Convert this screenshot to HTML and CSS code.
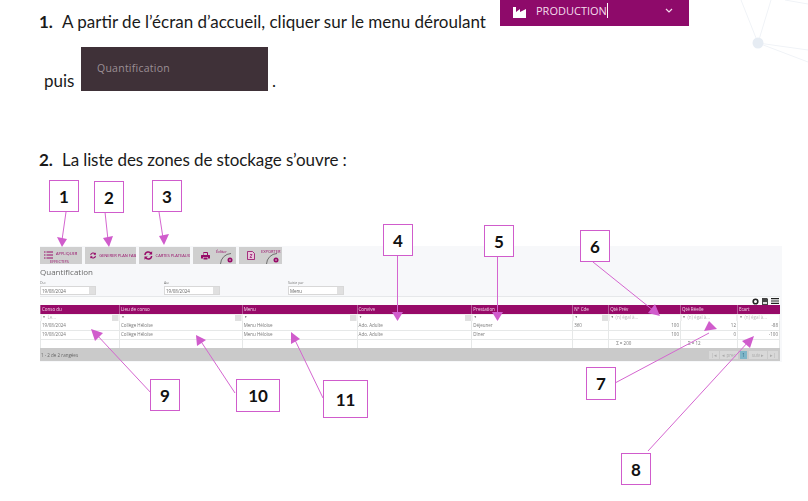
FILE: index.html
```html
<!DOCTYPE html>
<html lang="fr">
<head>
  <meta charset="UTF-8">
  <title>Quantification</title>
  <link rel="stylesheet" href="styles.css">
</head>
<body>
  <!-- fond décoratif -->
  <svg class="network" width="808" height="80" viewBox="0 0 808 80">
    <path d="M758 43L741 0M758 43L771 0M758 43L808 50M758 43L808 62M785 0L808 4" fill="none" stroke="#f0f3f7" stroke-width="1"/>
    <circle cx="758" cy="43" r="5.5" fill="#e6ecf3"/>
  </svg>

  <div class="step step-one">
    <b class="num">1.</b>
    <span class="step-text">A partir de l’écran d’accueil, cliquer sur le menu déroulant</span>
    <div class="prod-menu">
      <svg class="factory" width="13" height="11" viewBox="0 0 13 11"><path d="M0 0H3V5L7 2V5L13 2V11H0Z" fill="#fff"/></svg>
      <span class="prod-label"><span class="caret">PRODUCTION</span></span>
      <svg class="chevron" width="8" height="5" viewBox="0 0 8 5"><path d="M1 1L4 4L7 1" fill="none" stroke="#f4dcec" stroke-width="1.2"/></svg>
    </div>
  </div>

  <div class="step step-puis">
    <span class="puis">puis</span>
    <div class="quant-menu"><span>Quantification</span></div>
    <span class="dot">.</span>
  </div>

  <div class="step step-two">
    <b class="num">2.</b>
    <span class="step-text">La liste des zones de stockage s’ouvre :</span>
  </div>

  <div class="shot">
    <div class="toolbar">
      <div class="tool tool-first">
        <svg width="9" height="8" viewBox="0 0 9 8"><path d="M0 1H1.500M2.500 1H9M0 4H1.500M2.500 4H9M0 7H1.500M2.500 7H9" stroke="#970a68" stroke-width="1"/></svg>
        <span class="tool-two-lines"><span class="l1">APPLIQUER</span><span class="l2">EFFECTIFS</span></span>
      </div>
      <div class="tool tool-wide">
        <svg width="9" height="9" viewBox="0 0 9 9"><path d="M1 4A3.500 3.500 0 0 1 7.500 2.500M8 5A3.500 3.500 0 0 1 1.500 6.500" fill="none" stroke="#970a68" stroke-width="1.5"/><path d="M8.500 0V3.500H5ZM.5 9V5.500H4Z" fill="#970a68"/></svg>
        <span>GENERER PLAN FAB</span>
      </div>
      <div class="tool tool-wide">
        <svg width="9" height="9" viewBox="0 0 9 9"><path d="M1 4A3.500 3.500 0 0 1 7.500 2.500M8 5A3.500 3.500 0 0 1 1.500 6.500" fill="none" stroke="#970a68" stroke-width="1.500"/><path d="M8.500 0V3.500H5ZM.5 9V5.500H4Z" fill="#970a68"/></svg>
        <span>CARTES PLATEAUX</span>
      </div>
      <div class="tool tool-split">
        <svg width="9" height="8" viewBox="0 0 9 8"><path d="M2.500 .5H6.500V3" fill="none" stroke="#970a68" stroke-width="1"/><path d="M2 .5V3H0.500L0 3.500V6.500H2V5H7V6.500H9V3.500L8.500 3H2.500V.5Z" fill="#970a68"/><path d="M2.500 5.500H6.500V7.500H2.500Z" fill="#970a68"/></svg>
        <span class="tool-top">Éditer</span>
        <svg class="corner" width="16" height="12" viewBox="0 0 16 12"><path d="M.5 12A11 11 0 0 1 11 1.500" fill="none" stroke="#555" stroke-width=".8"/><circle cx="10" cy="8" r="2.500" fill="#970a68"/><circle cx="10" cy="8" r=".8" fill="#ddd"/></svg>
      </div>
      <div class="tool tool-split">
        <svg width="8" height="9" viewBox="0 0 8 9"><path d="M.5 .5H5.500L7.500 2.500V8.500H.5Z" fill="#e6c6da" stroke="#970a68" stroke-width=".8"/><path d="M3 3.500H5L3 6.500H5" fill="none" stroke="#970a68" stroke-width=".7"/></svg>
        <span class="tool-top">EXPORTER</span>
        <svg class="corner" width="16" height="12" viewBox="0 0 16 12"><path d="M.5 12A11 11 0 0 1 11 1.500" fill="none" stroke="#555" stroke-width=".8"/><circle cx="10" cy="8" r="2.500" fill="#970a68"/><circle cx="10" cy="8" r=".8" fill="#ddd"/></svg>
      </div>
    </div>

    <h1 class="shot-title">Quantification</h1>

    <div class="filters">
      <div class="field field-du">
        <label>Du:</label>
        <div class="combo"><span>19/08/2024</span><i class="drop"></i></div>
      </div>
      <div class="field field-au">
        <label>Au:</label>
        <div class="combo"><span>19/08/2024</span><i class="drop"></i></div>
      </div>
      <div class="field">
        <label>Saisie par</label>
        <div class="combo"><span>Menu</span><i class="drop"></i></div>
      </div>
    </div>

    <div class="grid-tools">
      <svg width="7" height="7" viewBox="0 0 7 7"><circle cx="3.500" cy="3.500" r="2.300" fill="none" stroke="#222" stroke-width="1.600"/></svg>
      <svg width="6" height="7" viewBox="0 0 6 7"><path d="M0 0H5L6 1V7H0Z" fill="#444"/><path d="M1 4H5V6H1Z" fill="#ddd"/></svg>
      <svg width="8" height="6" viewBox="0 0 8 6"><path d="M0 .7H8M0 3H8M0 5.300H8" stroke="#222" stroke-width="1.200"/></svg>
    </div>

    <table class="grid">
      <colgroup>
        <col class="c-date"><col class="c-lieu"><col class="c-menu"><col class="c-convive"><col class="c-presta"><col class="c-cde"><col class="c-prev"><col class="c-reel"><col class="c-ecart">
      </colgroup>
      <thead>
        <tr class="head">
          <th>Conso du</th><th>Lieu de conso</th><th>Menu</th><th>Convive</th><th>Prestation</th><th>N° Cde</th><th>Qté Prév</th><th>Qté Réelle</th><th>Ecart</th>
        </tr>
        <tr class="search">
          <td><div class="sf"><em>▼</em><span>Le...</span><i class="drop"></i></div></td>
          <td><div class="sf"><em>▼</em><i class="drop"></i></div></td>
          <td><div class="sf"><em>▼</em><i class="drop"></i></div></td>
          <td><div class="sf"><em>▼</em><i class="drop"></i></div></td>
          <td><div class="sf"><em>▼</em></div></td>
          <td><div class="sf"><em>▼</em><i class="drop"></i></div></td>
          <td><div class="sf"><em>▼</em><span>(n) égal à...</span></div></td>
          <td><div class="sf"><em>▼</em><span>(n) égal à...</span></div></td>
          <td><div class="sf"><em>▼</em><span>(n) égal à...</span></div></td>
        </tr>
      </thead>
      <tbody>
        <tr>
          <td>19/08/2024</td><td>Collège Héloïse</td><td>Menu Héloïse</td><td>Ado. Adulte</td><td>Déjeuner</td><td>360</td><td class="n">100</td><td class="n">12</td><td class="n">-88</td>
        </tr>
        <tr>
          <td>19/08/2024</td><td>Collège Héloïse</td><td>Menu Héloïse</td><td>Ado. Adulte</td><td>Dîner</td><td></td><td class="n">100</td><td class="n">0</td><td class="n">-100</td>
        </tr>
        <tr>
          <td></td><td></td><td></td><td></td><td></td><td></td><td class="sum">Σ = 200</td><td class="sum">Σ = 12</td><td></td>
        </tr>
      </tbody>
    </table>

    <div class="pager-bar">
      <span>1 - 2 de 2 rangées</span>
      <div class="pager">
        <a class="pg pg-end">|◂</a>
        <a class="pg pg-long">◂ prec</a>
        <a class="pg pg-on">1</a>
        <a class="pg pg-long">suiv ▸</a>
        <a class="pg pg-end">▸|</a>
      </div>
    </div>
  </div>

  <!-- flèches d'annotation -->
  <svg class="arrows" width="808" height="501" viewBox="0 0 808 501">
    <g class="arrow-lines">
      <path d="M66 212L62 240"/>
      <path d="M105 212L108 240"/>
      <path d="M159 212L163 238"/>
      <path d="M397.500 256V314"/>
      <path d="M497.500 257V314"/>
      <path d="M593 262L654 311"/>
      <path d="M615 383L709 333"/>
      <path d="M648 451L749 341"/>
      <path d="M152 394L96 334"/>
      <path d="M235 393L200 340"/>
      <path d="M323 398L294 338"/>
    </g>
    <g class="arrow-heads">
      <path d="M62 247L57 237L67 239Z"/>
      <path d="M109 247L103 238L113 236Z"/>
      <path d="M164 245L159 236L169 234Z"/>
      <path d="M397.500 321L392 312H403Z"/>
      <path d="M497.500 321L492 312H503Z"/>
      <path d="M660 316L648 313L655 304Z"/>
      <path d="M717 329L704 331L709 321Z"/>
      <path d="M754 336L750 348L742 341Z"/>
      <path d="M91 329L103 333L95 341Z"/>
      <path d="M196 335L206 340L197 346Z"/>
      <path d="M291 332L300 339L291 344Z"/>
    </g>
  </svg>

  <div class="tag tag-1">1</div>
  <div class="tag tag-2">2</div>
  <div class="tag tag-3">3</div>
  <div class="tag tag-4">4</div>
  <div class="tag tag-5">5</div>
  <div class="tag tag-6">6</div>
  <div class="tag tag-7">7</div>
  <div class="tag tag-8">8</div>
  <div class="tag tag-9">9</div>
  <div class="tag tag-10">10</div>
  <div class="tag tag-11">11</div>
</body>
</html>
```

FILE: styles.css
```css
html, body {
  margin: 0;
  padding: 0;
}

body {
  position: relative;
  width: 808px;
  height: 501px;
  overflow: hidden;
  background: #fff;
  color: #1a1a1a;
  font-family: Lato, "Open Sans", sans-serif;
  font-size: 17px;
}

.network {
  position: absolute;
  top: 0;
  left: 0;
}

/* Texte du document */
.step {
  position: relative;
  display: flex;
  padding-left: 39px;
}

.num {
  width: 23px;
}

.step-one {
  height: 26px;
}

.step-one .num,
.step-one .step-text {
  padding-top: 12px;
  line-height: 20px;
}

.step-one .step-text {
  width: 425px;
  white-space: nowrap;
}

.prod-menu {
  display: flex;
  align-items: center;
  width: 189px;
  height: 26px;
  margin-left: 13px;
  padding: 0 16px 6px 13px;
  box-sizing: border-box;
  background: #8e0a6a;
  color: #f4dcec;
  font-family: "Open Sans", sans-serif;
  font-size: 11px;
}

.factory {
  margin-top: 4px;
}

.prod-label {
  flex: 1;
  margin-left: 10px;
}

.caret {
  border-right: 1px solid #fff;
}

.step-puis {
  align-items: flex-end;
  height: 44px;
  margin-top: 21px;
  padding-left: 44px;
  line-height: 20px;
}

.puis {
  width: 37px;
}

.quant-menu {
  display: flex;
  align-items: center;
  width: 187px;
  height: 44px;
  padding: 0 16px 3px;
  box-sizing: border-box;
  background: #3f3138;
  color: #9b8f95;
  font-family: "Open Sans", sans-serif;
  font-size: 10.5px;
  line-height: 12px;
  letter-spacing: .25px;
}

.dot {
  margin-left: 4px;
}

.step-two {
  margin-top: 59px;
  line-height: 20px;
}

.step-two .step-text {
  letter-spacing: -.1px;
}

/* Capture de l'appli */
.shot {
  width: 742px;
  height: 116px;
  margin: 76px 0 0 40px;
  background: #f7f8fa;
  color: #777;
  font-family: "Open Sans", sans-serif;
  font-size: 4.5px;
  filter: blur(.45px);
}

.toolbar {
  display: flex;
  gap: 3px;
  height: 18px;
  padding-top: 1px;
  box-sizing: border-box;
}

.tool {
  position: relative;
  display: flex;
  align-items: center;
  gap: 3px;
  box-sizing: border-box;
  height: 17px;
  padding-left: 5px;
  background: #cfcfcf;
  color: #970a68;
  font-size: 4px;
  white-space: nowrap;
  overflow: hidden;
}

.tool-first {
  align-items: flex-start;
  width: 42px;
  padding-top: 4px;
  padding-left: 4px;
}

.tool-wide {
  width: 51px;
}

.tool-split {
  width: 43px;
  padding-left: 8px;
}

.tool-two-lines {
  display: flex;
  flex-direction: column;
  gap: 3px;
}

.tool-two-lines .l2 {
  margin-left: -6px;
}

.tool-top {
  margin: -8px 0 0 3px;
}

.corner {
  position: absolute;
  right: 0;
  bottom: 0;
}

.shot-title {
  margin: 2px 0 0;
  color: #6a6a6a;
  font-size: 8px;
  font-weight: 400;
  line-height: 11px;
}

.filters {
  display: flex;
  height: 19px;
  padding-top: 4px;
  box-sizing: border-box;
}

.field {
  display: flex;
  flex-direction: column;
  width: 56px;
}

.field-du,
.field-au {
  margin-right: 68px;
}

.field label {
  height: 4px;
  line-height: 4px;
  font-size: 3.5px;
}

.combo {
  display: flex;
  align-items: center;
  justify-content: space-between;
  box-sizing: border-box;
  height: 9px;
  margin-top: 1px;
  padding-left: 1px;
  background: #fff;
  border: 1px solid #d8d8d8;
  color: #666;
}

.drop {
  display: block;
  width: 6px;
  height: 100%;
  background: #e0e0e0;
}

.grid-tools {
  display: flex;
  align-items: center;
  justify-content: flex-end;
  gap: 3px;
  box-sizing: border-box;
  width: 740px;
  height: 9px;
  padding-right: 1px;
  background: #fbfcfc;
  border-top: 1px solid #e6e8ea;
}

.grid {
  display: block;
  width: 740px;
  height: 43px;
  table-layout: fixed;
  border-collapse: collapse;
}

.c-date { width: 79px; }
.c-lieu { width: 123px; }
.c-menu { width: 115px; }
.c-convive { width: 115px; }
.c-presta { width: 101px; }
.c-cde { width: 36px; }
.c-prev { width: 72px; }
.c-reel { width: 57px; }
.c-ecart { width: 42px; }

.grid th,
.grid td {
  box-sizing: border-box;
  padding: 0 1px;
  overflow: hidden;
  white-space: nowrap;
  line-height: 5px;
}

.head th {
  height: 9px;
  background: #970a68;
  border-left: 1px solid #b55a98;
  color: #f0d8e8;
  font-weight: 400;
  text-align: left;
}

.grid .search td {
  height: 7px;
  padding: 0 1px;
  background: #f0f0f0;
  line-height: 0;
}

.sf {
  display: flex;
  align-items: center;
  height: 6px;
  background: #fff;
  color: #bbb;
  line-height: 5px;
}

.sf em {
  margin: 0 2px 0 1px;
  color: #555;
  font-size: 3px;
  font-style: normal;
}

.sf .drop {
  margin-left: auto;
}

tbody td {
  height: 9px;
  background: #fff;
  border: 1px solid #e6e8e8;
  border-top: 0;
}

td.n {
  text-align: right;
}

.grid td.sum {
  padding-left: 7px;
}

.pager-bar {
  display: flex;
  align-items: center;
  justify-content: space-between;
  box-sizing: border-box;
  width: 740px;
  height: 13px;
  padding: 0 2px 0 1px;
  background: #cacaca;
  color: #666;
}

.pager {
  display: flex;
  gap: 1px;
}

.pg {
  height: 8px;
  line-height: 8px;
  text-align: center;
  background: #d8d8d8;
  color: #aaa;
}

.pg-end { width: 10px; }
.pg-long { width: 18px; }

.pg-on {
  width: 7px;
  margin: 0 1px;
  background: #7fb5c8;
  color: #2a6a85;
}

/* Annotations */
.arrows {
  position: absolute;
  top: 0;
  left: 0;
}

.arrow-lines path {
  fill: none;
  stroke: #d566d0;
  stroke-width: 1;
}

.arrow-heads path {
  fill: #d05ccc;
}

.tag {
  position: absolute;
  display: flex;
  align-items: center;
  justify-content: center;
  box-sizing: border-box;
  width: 30px;
  height: 32px;
  background: #fff;
  border: 1px solid #d05ccc;
  color: #111;
  font-family: Lato, sans-serif;
  font-size: 17px;
  font-weight: 700;
}

.tag-1 { left: 49px; top: 180px; }
.tag-2 { left: 94px; top: 181px; }
.tag-3 { left: 152px; top: 180px; }
.tag-4 { left: 383px; top: 224px; }
.tag-5 { left: 484px; top: 225px; }
.tag-6 { left: 580px; top: 230px; }
.tag-7 { left: 586px; top: 367px; height: 33px; }
.tag-8 { left: 621px; top: 453px; }
.tag-9 { left: 150px; top: 379px; }
.tag-10 { left: 236px; top: 379px; width: 44px; height: 33px; }
.tag-11 { left: 323px; top: 380px; width: 45px; height: 38px; }
```
